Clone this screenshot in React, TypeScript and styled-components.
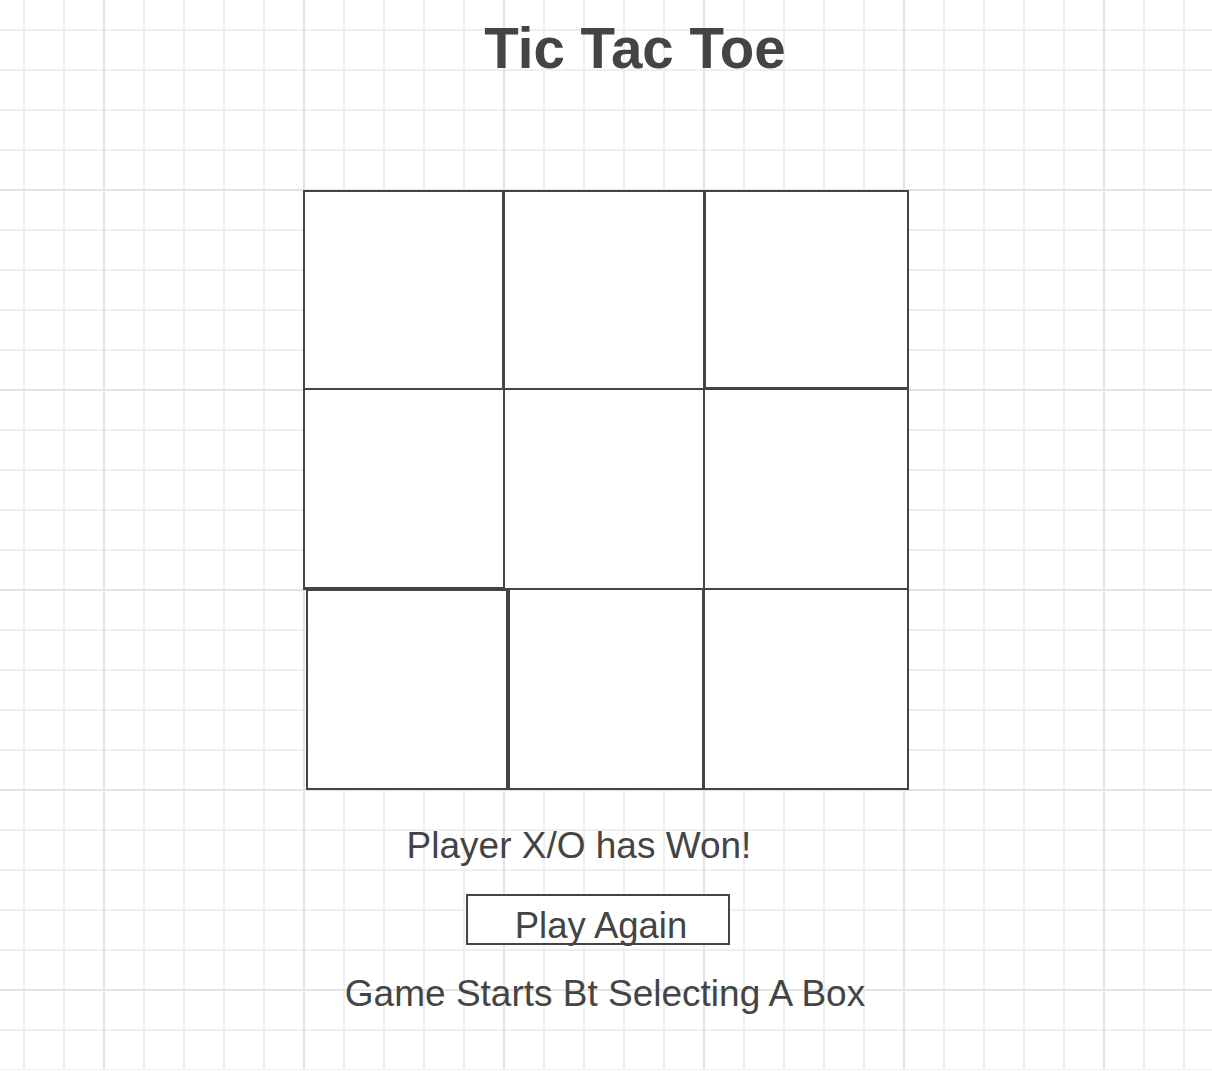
import React from "react";
import styled, { createGlobalStyle } from "styled-components";

const GlobalStyle = createGlobalStyle`
  html, body {
    margin: 0;
    padding: 0;
    background: #fff;
  }
  body {
    font-family: "Liberation Sans", Arial, sans-serif;
    color: #444;
  }
`;

const Page = styled.div`
  width: 1212px;
  min-height: 1070px;
  display: flex;
  flex-direction: column;
  align-items: center;
  background-color: #fff;
  background-image:
    linear-gradient(to right, #e3e3e3 2px, transparent 2px),
    linear-gradient(to bottom, #e3e3e3 2px, transparent 2px),
    linear-gradient(to right, #eeeeee 2px, transparent 2px),
    linear-gradient(to bottom, #eeeeee 2px, transparent 2px);
  background-size: 200px 200px, 200px 200px, 40px 40px, 40px 40px;
  background-position: 103px 0, 0 189px, 23px 0, 0 29px;
`;

const Title = styled.h1`
  margin: 17px 0 0 58px;
  font-size: 56.5px;
  line-height: 64px;
  font-weight: bold;
  color: #444;
`;

const Board = styled.div`
  margin-top: 110px;
  display: grid;
  grid-template-columns: 200px 200px 204px;
  grid-template-rows: 198px 200px 200px;
`;

// hand-drawn look: some sides a bit heavier, bottom row slightly off the grid
const Cell = styled.button<{ $thick?: string; $ml?: number; $mr?: number }>`
  box-sizing: border-box;
  margin: -1px;
  margin-left: ${(p) => p.$ml ?? -1}px;
  margin-right: ${(p) => p.$mr ?? -1}px;
  padding: 0;
  background: #fff;
  border: 2px solid #444;
  border-top-width: ${(p) => (p.$thick?.includes("t") ? "3px" : "2px")};
  border-right-width: ${(p) => (p.$thick?.includes("r") ? "3px" : "2px")};
  border-bottom-width: ${(p) => (p.$thick?.includes("b") ? "3px" : "2px")};
  border-left-width: ${(p) => (p.$thick?.includes("l") ? "3px" : "2px")};
  cursor: pointer;
`;

const Message = styled.p<{ $shift?: number }>`
  margin: 36px 0 0 ${(p) => (p.$shift ?? 0) * 2}px;
  font-size: 37px;
  line-height: 42px;
`;

const PlayButton = styled.button`
  box-sizing: border-box;
  margin: 27px 0 0 -16px;
  width: 264px;
  height: 51px;
  padding: 9px 0 0 6px;
  background: #fff;
  border: 2px solid #444;
  font-family: "Liberation Sans", Arial, sans-serif;
  font-size: 36.5px;
  line-height: 42px;
  color: #444;
  display: flex;
  align-items: flex-start;
  justify-content: center;
  overflow: visible;
  cursor: pointer;
`;

const Hint = styled.p`
  margin: 28px 0 0 -2px;
  font-size: 37px;
  line-height: 42px;
`;

const cells: { thick?: string; ml?: number; mr?: number }[] = [
  { thick: "r" },
  {},
  { thick: "lb" },
  { thick: "b" },
  {},
  {},
  { thick: "tr", ml: 2, mr: -5 },
  { ml: 4, mr: 0 },
  {},
];

export default function App() {
  return (
    <>
      <GlobalStyle />
      <Page>
        <Title>Tic Tac Toe</Title>
        <Board>
          {cells.map((c, i) => (
            <Cell key={i} $thick={c.thick} $ml={c.ml} $mr={c.mr} />
          ))}
        </Board>
        <Message $shift={-27}>Player X/O has Won!</Message>
        <PlayButton>Play Again</PlayButton>
        <Hint>Game Starts Bt Selecting A Box</Hint>
      </Page>
    </>
  );
}
